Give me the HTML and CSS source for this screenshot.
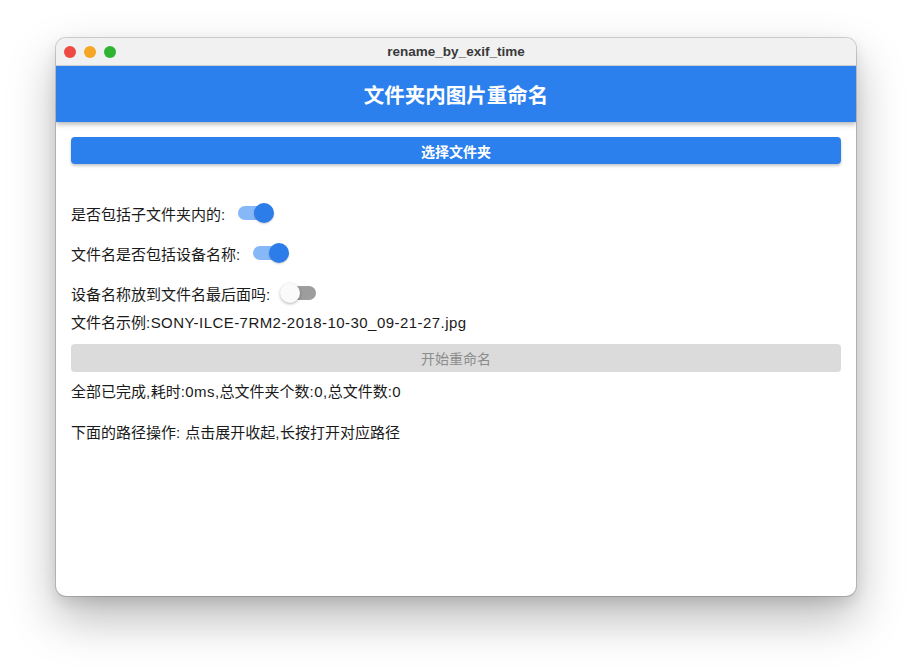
FILE: index.html
```html
<!DOCTYPE html>
<html lang="zh">
<head>
<meta charset="utf-8">
<title>rename_by_exif_time</title>
<link rel="stylesheet" href="styles.css">
</head>
<body>
<div class="window">
  <div class="titlebar">
    <div class="lights">
      <span class="light red"></span>
      <span class="light yellow"></span>
      <span class="light green"></span>
    </div>
    <div class="wtitle">rename_by_exif_time</div>
  </div>
  <div class="appbar">文件夹内图片重命名</div>
  <div class="content">
    <div class="btn primary">选择文件夹</div>
    <div class="row first">
      <span class="label">是否包括子文件夹内的:</span>
      <span class="switch on"><span class="track"><span class="thumb"></span></span></span>
    </div>
    <div class="row">
      <span class="label">文件名是否包括设备名称:</span>
      <span class="switch on"><span class="track"><span class="thumb"></span></span></span>
    </div>
    <div class="row">
      <span class="label">设备名称放到文件名最后面吗:</span>
      <span class="switch off"><span class="track"><span class="thumb"></span></span></span>
    </div>
    <div class="line">文件名示例<span class="lat">:SONY-ILCE-7RM2-2018-10-30_09-21-27.jpg</span></div>
    <div class="btn disabled">开始重命名</div>
    <div class="line status">全部已完成<span class="lat">,</span>耗时<span class="lat">:0ms,</span>总文件夹个数<span class="lat">:0,</span>总文件数<span class="lat">:0</span></div>
    <div class="line hint">下面的路径操作<span class="lat">: </span>点击展开收起<span class="lat">,</span>长按打开对应路径</div>
  </div>
</div>
</body>
</html>
```

FILE: styles.css
```css
html, body {
  margin: 0;
  padding: 0;
  background: #ffffff;
}
body {
  min-height: 670px;
  box-sizing: border-box;
  padding: 38px 0 0 56px;
  font-family: "Liberation Sans", "Noto Sans CJK SC", sans-serif;
}
.window {
  width: 800px;
  height: 558px;
  border-radius: 10px;
  overflow: hidden;
  background: #ffffff;
  box-shadow: 0 0 0 1px rgba(0,0,0,0.16), 0 22px 48px rgba(0,0,0,0.28), 0 6px 14px rgba(0,0,0,0.10);
  display: flex;
  flex-direction: column;
}
.titlebar {
  height: 28px;
  flex: none;
  background: #f1f1f1;
  border-bottom: 1px solid #d4d4d4;
  box-sizing: border-box;
  display: flex;
  align-items: center;
  position: relative;
}
.lights {
  display: flex;
  gap: 8px;
  padding-left: 8px;
  padding-top: 1px;
}
.light {
  width: 12px;
  height: 12px;
  border-radius: 50%;
  display: block;
}
.red { background: #ee4a43; }
.yellow { background: #f4a624; }
.green { background: #2fb432; }
.wtitle {
  position: absolute;
  left: 0;
  right: 0;
  top: 0;
  line-height: 27px;
  text-align: center;
  font-size: 13.5px;
  font-weight: bold;
  color: #3a3a3a;
}
.appbar {
  height: 56px;
  flex: none;
  background: #2c80ee;
  color: #ffffff;
  font-size: 20.5px;
  font-weight: 600;
  display: flex;
  align-items: center;
  justify-content: center;
  box-shadow: 0 2px 4px rgba(0,0,0,0.22), 0 4px 6px rgba(0,0,0,0.08);
  position: relative;
  z-index: 1;
}
.content {
  padding: 15px 15px 0 15px;
  font-size: 15px;
  color: #1a1a1a;
}
.btn {
  height: 27px;
  border-radius: 4px;
  display: flex;
  align-items: center;
  justify-content: center;
  font-size: 14px;
}
.primary {
  background: #2c80ee;
  color: #ffffff;
  font-weight: bold;
  box-shadow: 0 2px 3px rgba(0,0,0,0.22);
}
.disabled {
  background: #dbdbdb;
  color: #8c8c8c;
  margin-top: 11px;
  height: 28px;
}
.row {
  height: 40px;
  display: flex;
  align-items: center;
}
.row.first {
  margin-top: 29px;
}
.switch {
  width: 59px;
  height: 40px;
  display: flex;
  align-items: center;
  justify-content: center;
}
.track {
  width: 33px;
  height: 14px;
  border-radius: 7px;
  position: relative;
}
.thumb {
  position: absolute;
  width: 20px;
  height: 20px;
  border-radius: 50%;
  top: -3px;
}
.on .track { background: #86b7f6; }
.on .thumb {
  left: 16px;
  background: #2c7de9;
  box-shadow: 0 1px 2px rgba(0,0,0,0.2);
}
.off .track { background: #9d9d9d; }
.off .thumb {
  left: -3px;
  background: #fafafa;
  box-shadow: 0 1px 3px rgba(0,0,0,0.3);
}
.line {
  line-height: 20px;
}
.lat {
  letter-spacing: 0.45px;
}
.status {
  margin-top: 10px;
}
.hint {
  margin-top: 21px;
}
```
